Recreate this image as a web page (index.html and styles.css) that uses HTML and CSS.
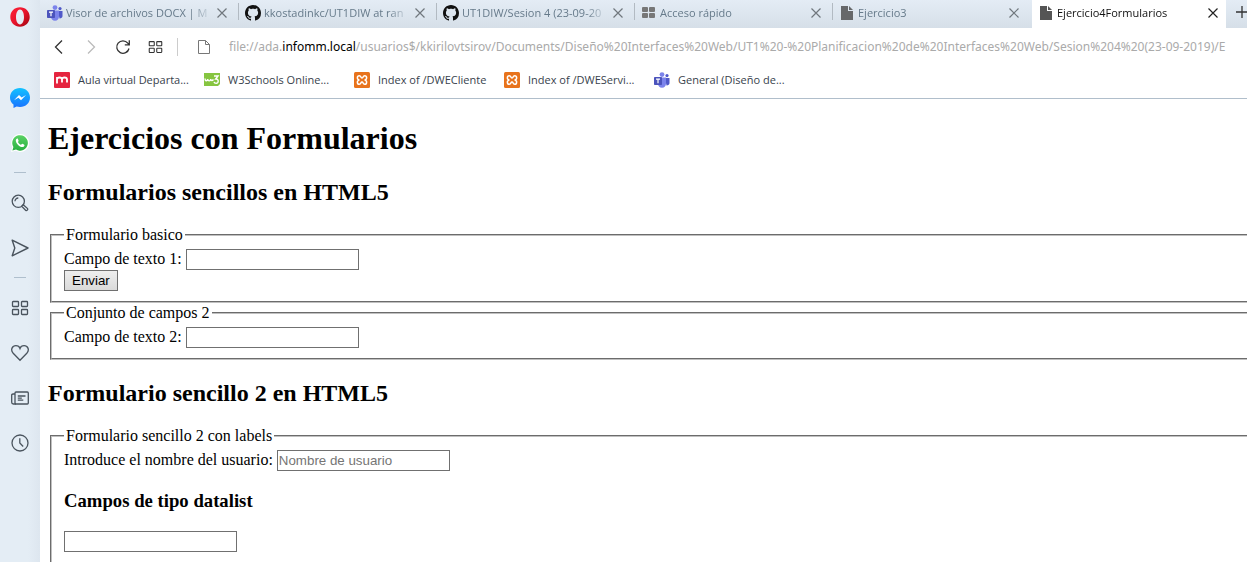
FILE: index.html
```html
<!DOCTYPE html>
<html lang="es">
<head>
<meta charset="utf-8">
<title>Ejercicio4Formularios</title>
<link rel="stylesheet" href="styles.css">
</head>
<body>
<svg class="defs" aria-hidden="true">
  <defs>
    <linearGradient id="gOpera" x1="0" y1="0" x2="1" y2="1"><stop offset="0" stop-color="#ff2438"/><stop offset=".5" stop-color="#e8142c"/><stop offset="1" stop-color="#9c0410"/></linearGradient>
    <linearGradient id="gMess" x1="0" y1="0" x2="0" y2="1"><stop offset="0" stop-color="#12c2ff"/><stop offset="1" stop-color="#1a72ff"/></linearGradient>
    <linearGradient id="gWa" x1="0" y1="0" x2="0" y2="1"><stop offset="0" stop-color="#5bd266"/><stop offset="1" stop-color="#28b040"/></linearGradient>
  </defs>
  <symbol id="close" viewBox="0 0 10 10"><path d="M.5.5l9 9M9.5.5l-9 9" fill="none" stroke="currentColor" stroke-width="1.2"/></symbol>
  <symbol id="doc" viewBox="0 0 12 14"><path d="M0 0h7v5h5v9H0z" fill="currentColor"/><path d="M8 0l4 4H8z" fill="currentColor"/></symbol>
  <symbol id="github" viewBox="0 0 16 16"><path fill="#111" fill-rule="evenodd" d="M8 0C3.58 0 0 3.58 0 8c0 3.54 2.29 6.53 5.47 7.59.4.07.55-.17.55-.38 0-.19-.01-.82-.01-1.49-2.01.37-2.53-.49-2.69-.94-.09-.23-.48-.94-.82-1.13-.28-.15-.68-.52-.01-.53.63-.01 1.08.58 1.23.82.72 1.21 1.87.87 2.33.66.07-.52.28-.87.51-1.07-1.78-.2-3.64-.89-3.64-3.95 0-.87.31-1.59.82-2.15-.08-.2-.36-1.02.08-2.12 0 0 .67-.21 2.2.82.64-.18 1.32-.27 2-.27s1.36.09 2 .27c1.53-1.04 2.2-.82 2.2-.82.44 1.1.16 1.92.08 2.12.51.56.82 1.27.82 2.15 0 3.07-1.87 3.75-3.65 3.95.29.25.54.73.54 1.48 0 1.07-.01 1.93-.01 2.2 0 .21.15.46.55.38A8.01 8.01 0 0 0 16 8c0-4.42-3.58-8-8-8z"/></symbol>
  <symbol id="teams" viewBox="0 0 16 16"><circle cx="8" cy="2.600" r="2.400" fill="#7b83eb"/><circle cx="13" cy="3.600" r="1.600" fill="#5059c9"/><path d="M11 6h4.500v5c0 1.600-1.200 2.500-3 2.500z" fill="#5059c9"/><path d="M4 5.500h8v6c0 2.600-1.500 4.200-4 4.200S4 14 4 11.500z" fill="#7b83eb"/><rect y="5" width="8" height="8" rx=".8" fill="#4b53bc"/><path d="M2 7.200h4M4 7.200v4" stroke="#fff" stroke-width="1.200"/></symbol>
  <symbol id="xampp" viewBox="0 0 16 16"><rect width="16" height="16" rx="1.500" fill="#e8731c"/><path d="M5.500 8C2.500 8 2.900 3.700 5.300 3.700 7.300 3.700 6.500 6 8 6s.7-2.300 2.700-2.300C13.100 3.700 13.500 8 10.500 8c3 0 2.600 4.300.2 4.300C8.700 12.300 9.500 10 8 10s-.7 2.300-2.700 2.300C2.900 12.300 2.500 8 5.500 8z" fill="none" stroke="#fff" stroke-width="1.500"/></symbol>
  <symbol id="grid" viewBox="0 0 18 16"><g fill="none" stroke="currentColor" stroke-width="1.300"><rect x="1.500" y="1.500" width="6" height="5" rx=".7"/><rect x="10.500" y="1.500" width="6" height="5" rx=".7"/><rect x="1.500" y="9.500" width="6" height="5" rx=".7"/><rect x="10.500" y="9.500" width="6" height="5" rx=".7"/></g></symbol>
</svg>

<div class="browser">
  <nav class="sidebar" aria-label="Barra lateral">
    <button class="opera" aria-label="Opera"><svg width="20" height="20" viewBox="0 0 20 20"><path fill="url(#gOpera)" fill-rule="evenodd" d="M10 .3C4.500.3.300 4.500.300 10S4.500 19.700 10 19.700 19.700 15.500 19.700 10 15.500.3 10 .3zM10 2.600c2.300 0 4 3.200 4 7.400s-1.700 7.400-4 7.400S6 14.200 6 10s1.700-7.400 4-7.400z"/></svg></button>
    <button class="side" aria-label="Messenger"><svg width="20" height="20" viewBox="0 0 20 20"><path fill="url(#gMess)" d="M10 0C4.300 0 0 4.100 0 9.500c0 3 1.300 5.400 3.500 7.100V20l3.100-1.500c1 .3 2.200.5 3.400.5 5.700 0 10-4.100 10-9.500S15.700 0 10 0z"/><path fill="#fff" d="M4 12.300l5-5.300 2.600 2.500L16 7l-5 5.300-2.600-2.500z"/></svg></button>
    <button class="side" aria-label="WhatsApp"><svg width="18" height="18" viewBox="0 0 18 18"><path fill="#fff" d="M0 18l1.300-4.700A9 9 0 1 1 4.700 16.800z"/><path fill="url(#gWa)" d="M1.400 16.600l1-3.600a7.800 7.800 0 1 1 2.600 2.600z"/><path fill="#fff" d="M6.300 4.500c-.5 0-1.500.7-1.500 2 0 2.700 3.600 6.600 6.500 6.600 1.300 0 2.200-.8 2.200-1.900 0-.4-.1-.5-2.200-1.400-.5-.2-.9 1.100-1.300 1-1-.3-2.600-1.700-3-2.900-.1-.4.800-.7.600-1.200-.6-1.600-.7-2.200-1.300-2.200z"/></svg></button>
    <hr class="rule">
    <button class="side" aria-label="Buscar"><svg width="18" height="18" viewBox="0 0 18 18" fill="none" stroke="currentColor" stroke-width="1.300"><circle cx="7.300" cy="7.300" r="6.100"/><path d="M4 7.300A3.300 3.300 0 0 1 7.300 4M10.700 12.200l1.500-1.500 4.400 3.900c.6 1-.8 2.400-1.800 1.800z"/></svg></button>
    <button class="side" aria-label="Mi Flow"><svg width="18" height="18" viewBox="0 0 18 18" fill="none" stroke="currentColor" stroke-width="1.400" stroke-linejoin="round"><path d="M1.200 1.200L17 9 1.200 16.800 3.800 9z"/></svg></button>
    <hr class="rule">
    <button class="side" aria-label="Acceso rápido"><svg width="18" height="16"><use href="#grid"/></svg></button>
    <button class="side" aria-label="Marcadores"><svg width="18" height="18" viewBox="0 0 18 18" fill="none" stroke="currentColor" stroke-width="1.300"><path d="M9 16.300L2.200 9.200C-1 5.700 1.400 1.700 4.900 1.700 7 1.700 8.500 3 9 4.500c.5-1.500 2-2.800 4.100-2.800 3.500 0 5.900 4 2.700 7.500z"/></svg></button>
    <button class="side" aria-label="Noticias"><svg width="18" height="16" viewBox="0 0 18 16" fill="none" stroke="currentColor" stroke-width="1.300"><rect x="4" y="2" width="13.300" height="12" rx="1"/><path d="M4 4H2Q.7 4 .7 5.200v7Q.7 14 2.400 14H5M6.800 6h7.700M6.800 8.200h4M6.800 10.200h5.500"/></svg></button>
    <button class="side" aria-label="Historial"><svg width="18" height="18" viewBox="0 0 18 18" fill="none" stroke="currentColor" stroke-width="1.300"><circle cx="9" cy="9" r="8"/><path d="M8.800 4.300V9l3.400 3.500"/></svg></button>
  </nav>

  <div class="window">
    <div class="tabs">
      <div class="tab"><svg width="16" height="16"><use href="#teams"/></svg><button class="title">Visor de archivos DOCX | M</button><button class="close" aria-label="Cerrar"><svg width="10" height="10"><use href="#close"/></svg></button></div>
      <div class="tab"><svg width="16" height="16"><use href="#github"/></svg><button class="title">kkostadinkc/UT1DIW at ran</button><button class="close" aria-label="Cerrar"><svg width="10" height="10"><use href="#close"/></svg></button></div>
      <div class="tab"><svg width="16" height="16"><use href="#github"/></svg><button class="title">UT1DIW/Sesion 4 (23-09-20</button><button class="close" aria-label="Cerrar"><svg width="10" height="10"><use href="#close"/></svg></button></div>
      <div class="tab"><svg width="16" height="16" viewBox="0 0 16 16" fill="#777"><rect x="1" y="2" width="6" height="5" rx="1"/><rect x="8" y="2" width="6" height="5" rx="1"/><rect x="1" y="8" width="6" height="5" rx="1"/><rect x="8" y="8" width="6" height="5" rx="1"/></svg><button class="title">Acceso rápido</button><button class="close" aria-label="Cerrar"><svg width="10" height="10"><use href="#close"/></svg></button></div>
      <div class="tab"><svg class="file" width="16" height="14"><use href="#doc"/></svg><button class="title">Ejercicio3</button><button class="close" aria-label="Cerrar"><svg width="10" height="10"><use href="#close"/></svg></button></div>
      <div class="tab active"><svg class="file" width="16" height="14"><use href="#doc"/></svg><button class="title">Ejercicio4Formularios</button><button class="close" aria-label="Cerrar"><svg width="10" height="10"><use href="#close"/></svg></button></div>
      <button class="add" aria-label="Nueva pestaña"><svg width="12" height="12" viewBox="0 0 12 12"><path d="M6 0v12M0 6h12" stroke="currentColor" stroke-width="1.300"/></svg></button>
    </div>

    <div class="toolbar">
      <button class="nav" aria-label="Atrás"><svg width="16" height="16" viewBox="0 0 16 16" fill="none" stroke="currentColor" stroke-width="1.300"><path d="M11 1.500L4.500 8l6.500 6.500"/></svg></button>
      <button class="nav off" aria-label="Adelante"><svg width="16" height="16" viewBox="0 0 16 16" fill="none" stroke="currentColor" stroke-width="1.300"><path d="M5 1.500L11.500 8 5 14.500"/></svg></button>
      <button class="nav" aria-label="Recargar"><svg width="16" height="16" viewBox="0 0 16 16" fill="none" stroke="currentColor" stroke-width="1.300"><path d="M14 9.500A6.200 6.200 0 1 1 12.800 4.200L14 5.500M14.300 1.300V5.800H9.800"/></svg></button>
      <button class="nav" aria-label="Páginas"><svg width="15" height="14" viewBox="0 0 18 16"><use href="#grid"/></svg></button>
      <span class="divider"></span>
      <svg class="page-icon" width="14" height="16" viewBox="0 0 14 16" fill="none" stroke="currentColor"><path d="M1.500 1.500h7l4 4v9h-11zM8.500 1.500v4h4"/></svg>
      <div class="url">file://ada.<b>infomm.local</b>/usuarios$/kkirilovtsirov/Documents/Diseño%20Interfaces%20Web/UT1%20-%20Planificacion%20de%20Interfaces%20Web/Sesion%204%20(23-09-2019)/E</div>
    </div>

    <div class="bookmarks">
      <a href="#"><svg width="16" height="16" viewBox="0 0 16 16"><rect width="16" height="16" rx="1" fill="#e5243f"/><path d="M3 11.500V5M3 7.500q0-2 2.500-2T8 7.500v3M8 7.500q0-2 2.500-2t2.500 2v3" fill="none" stroke="#fff" stroke-width="1.800"/></svg>Aula virtual Departa...</a>
      <a href="#"><svg width="16" height="16" viewBox="0 0 16 16"><path fill="#86c540" d="M0 1h16v11l-2 2H0z"/><path d="M1 6.500c0 3 2.500 3 2.700.5.200 2.500 2.800 2.500 3 0 .3 2 1.500 2 2.800.500M10 4h4l-2.300 3c3.300-.3 3.200 4.300.5 4.300-1.300 0-2-.7-2.200-1.500" fill="none" stroke="#fff" stroke-width="1.400"/></svg>W3Schools Online...</a>
      <a href="#"><svg width="16" height="16"><use href="#xampp"/></svg>Index of /DWECliente</a>
      <a href="#"><svg width="16" height="16"><use href="#xampp"/></svg>Index of /DWEServi...</a>
      <a href="#"><svg width="16" height="16"><use href="#teams"/></svg>General (Diseño de...</a>
    </div>

    <main class="page">
      <div class="document">
        <h1>Ejercicios con Formularios</h1>
        <h2>Formularios sencillos en HTML5</h2>
        <form>
          <fieldset>
            <legend>Formulario basico</legend>
            <label for="c1">Campo de texto 1:</label>
            <input class="field" type="text" id="c1"><br>
            <button class="submit" type="submit">Enviar</button>
          </fieldset>
          <fieldset>
            <legend>Conjunto de campos 2</legend>
            <label for="c2">Campo de texto 2:</label>
            <input class="field" type="text" id="c2">
          </fieldset>
        </form>
        <h2>Formulario sencillo 2 en HTML5</h2>
        <form>
          <fieldset class="tall">
            <legend>Formulario sencillo 2 con labels</legend>
            <label for="user">Introduce el nombre del usuario:</label>
            <input class="field" type="text" id="user" placeholder="Nombre de usuario">
            <h3 id="dl">Campos de tipo datalist</h3>
            <input class="field" type="text" aria-labelledby="dl">
          </fieldset>
        </form>
      </div>
    </main>
  </div>
</div>
</body>
</html>
```

FILE: styles.css
```css
* { box-sizing: border-box; }

body {
  margin: 0;
  background: #fff;
  color: #000;
}

svg { display: block; flex: none; }
.defs { position: absolute; width: 0; height: 0; }

.browser {
  display: flex;
  height: 100vh;
  overflow: hidden;
  font: 11px/16px "Open Sans", "Noto Sans", sans-serif;
}

.browser nav button,
.tabs button,
.nav {
  display: flex;
  align-items: center;
  justify-content: center;
  padding: 0;
  border: 0;
  background: none;
  color: inherit;
  font: inherit;
}

/* Sidebar */
.sidebar {
  display: flex;
  flex: none;
  flex-direction: column;
  width: 40px;
  background: linear-gradient(90deg, #e4edf5 70%, #dde6ef);
  color: #4a545e;
}
.sidebar .opera { height: 34px; margin-bottom: 41px; }
.sidebar .side { height: 45px; }
.rule {
  width: 12px;
  height: 1px;
  margin: 7px auto;
  border: 0;
  background: #afbfcd;
}

/* Tab strip */
.window {
  display: flex;
  flex: 1;
  flex-direction: column;
  min-width: 0;
}
.tabs {
  display: flex;
  flex: none;
  height: 28px;
  overflow: hidden;
  background: linear-gradient(#e4ecf5, #d6dfe8);
  color: #667a8a;
}
.tab {
  display: flex;
  flex: none;
  align-items: center;
  width: 198px;
  height: 26px;
  padding: 0 11px 0 6px;
  border-left: 1px solid transparent;
  border-image: linear-gradient(transparent 15%, #b2bac2 15%, #b2bac2 75%, transparent 75%) 1;
}
.tab:first-child { border-image: none; }
.tab .title {
  flex: 1;
  justify-content: flex-start;
  min-width: 0;
  margin: 0 5px 0 3px;
  overflow: hidden;
  white-space: nowrap;
  -webkit-mask-image: linear-gradient(90deg, #000 85%, transparent);
  mask-image: linear-gradient(90deg, #000 85%, transparent);
}
.tab .close { color: #70777d; }
.file { color: #66686a; }
.tab.active {
  width: 194px;
  height: 28px;
  margin-left: 2px;
  padding: 0 8px 2px 5px;
  border-image: none;
  background: #fff;
  color: #111;
}
.tab.active .close { color: #222; }
.tab.active .file { color: #555; }
.tabs .add { flex: none; height: 24px; margin-left: 10px; color: #333; }

/* Address bar */
.toolbar {
  display: flex;
  flex: none;
  align-items: center;
  height: 37px;
  padding-left: 3px;
}
.nav { flex: none; width: 32px; height: 32px; color: #333; }
.nav.off { color: #bbb; }
.divider { flex: none; width: 1px; height: 18px; margin: 0 19px 0 6px; background: #ccc; }
.page-icon { color: #777; }
.url {
  flex: 1;
  min-width: 0;
  margin-left: 18px;
  overflow: hidden;
  color: #aaa;
  font-family: "Noto Sans", "Open Sans", sans-serif;
  font-size: 12px;
  white-space: nowrap;
}
.url b { color: #000; font-weight: 400; }

/* Bookmarks */
.bookmarks {
  display: flex;
  flex: none;
  align-items: center;
  height: 34px;
  padding: 0 0 4px 14px;
  border-bottom: 1px solid #b0becb;
}
.bookmarks a {
  display: flex;
  gap: 8px;
  align-items: center;
  width: 150px;
  color: #38424c;
  text-decoration: none;
  white-space: nowrap;
}

/* Document */
.page {
  flex: 1;
  min-height: 0;
  overflow: hidden;
}
.document {
  margin: 0 -20px 0 8px;
  font: 16px "Liberation Serif", "Times New Roman", serif;
}
h1 { margin: 21px 0 22px; font-size: 32px; }
h2 { margin: 20px 0; font-size: 24px; }
h3 { margin: 19px 0; }
fieldset {
  padding: 5px 12px 10px;
  border: 2px groove #c0c0c0;
}
fieldset + fieldset { margin-top: 1px; }
fieldset.tall { padding-bottom: 40px; }
.field {
  width: 173px;
  height: 21px;
  padding: 1px;
  border: 1px solid #707070;
  background: #fff;
  font-family: "Liberation Sans", Arial, sans-serif;
}
.field::placeholder { color: #757575; }
.submit {
  height: 21px;
  padding: 1px 7px;
  border: 1px solid #707070;
  border-radius: 0;
  background: linear-gradient(#eee, #dadada);
  color: #000;
  font-family: "Liberation Sans", Arial, sans-serif;
}
```
